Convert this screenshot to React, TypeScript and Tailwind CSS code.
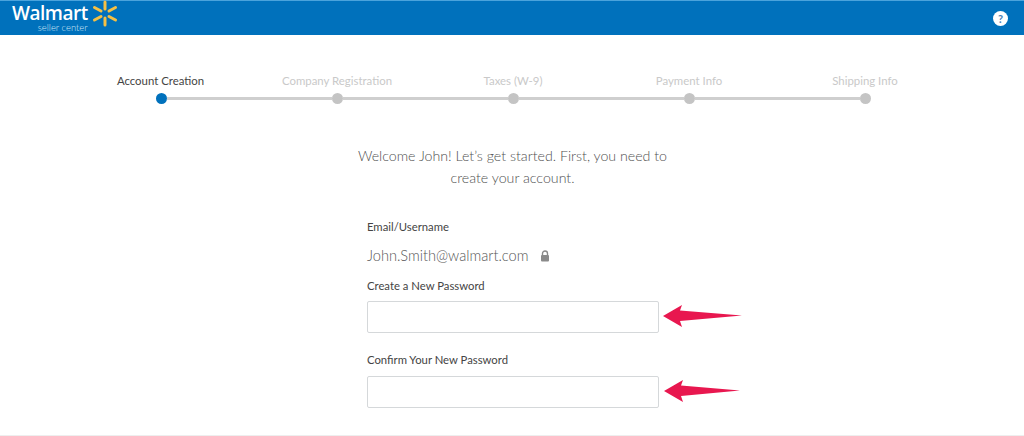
const steps = ["Account Creation", "Company Registration", "Taxes (W-9)", "Payment Info", "Shipping Info"];

function Spark() {
  return (
    <svg width="26" height="28" viewBox="0 0 26 28" className="-mt-[3px] ml-[4px] shrink-0">
      <g stroke="#f4c044" strokeWidth="3" strokeLinecap="round">
        <path d="M13 2 V9" />
        <path d="M13 18 V25" />
        <path d="M2.5 7.5 L9 11" />
        <path d="M23.5 7.5 L17 11" />
        <path d="M2.5 20 L9 16.5" />
        <path d="M23.5 20 L17 16.5" />
      </g>
    </svg>
  );
}

function Arrow({ end }: { end: number }) {
  return (
    <svg width="82" height="26" viewBox="0 0 82 26" className="shrink-0">
      <path d={`M1 12 L20 1 L18 6.5 L${end} 11.5 L18 17 L20 23 Z`} fill="#e8174f" />
    </svg>
  );
}

function Stepper() {
  return (
    <div className="flex justify-center pl-[2px] pt-[39px]">
      {steps.map((label, i) => (
        <div key={label} className="flex w-[176px] flex-col items-center">
          <div className={`whitespace-nowrap text-[11.4px] leading-[14px] ${i === 0 ? "-ml-[1px] text-[#444444]" : "text-[#c9c9c9]"}`}>
            {label}
          </div>
          <div className="mt-[5px] flex w-full items-center">
            <div className={`h-[3px] flex-1 ${i === 0 ? "" : "bg-[#cfcfcf]"}`} />
            <div className={`h-[11px] w-[11px] rounded-full ${i === 0 ? "bg-[#0071bc]" : "bg-[#c4c4c4]"}`} />
            <div className={`h-[3px] flex-1 ${i === 4 ? "" : "bg-[#cfcfcf]"}`} />
          </div>
        </div>
      ))}
    </div>
  );
}

export default function App() {
  return (
    <div className="flex h-[436px] w-[1024px] flex-col overflow-hidden border-b border-[#eeeeee] bg-white font-['Lato',sans-serif]">
      <header className="flex h-[35px] shrink-0 items-center justify-between border-t border-[#4aa3dc] bg-[#0071bc] pl-[12px] pr-[16px]">
        <div className="-mt-[1px] flex items-start">
          <div className="flex flex-col items-end">
            <div className="font-['Open_Sans',sans-serif] text-[19px] font-semibold leading-[20px] tracking-[-0.5px] text-white">Walmart</div>
            <div className="text-[9.5px] font-light leading-[9px] text-[#cfe6f6]">seller center</div>
          </div>
          <Spark />
        </div>
        <div className="flex h-[15px] w-[15px] items-center justify-center rounded-full bg-white text-[11px] font-bold leading-none text-[#4a7fb5]">
          ?
        </div>
      </header>

      <Stepper />

      <p className="mt-[41px] pl-[1px] text-center text-[14.2px] font-light leading-[22px] text-[#505050]">
        Welcome John! Let’s get started. First, you need to
        <br />
        create your account.
      </p>

      <form className="ml-[367px] mt-[31px] flex flex-col">
        <label className="text-[11.3px] leading-[14px] text-[#444444]">Email/Username</label>
        <div className="mt-[12px] flex h-[20px] items-center">
          <span className="text-[14.6px] font-light leading-[20px] text-[#555555]">John.Smith@walmart.com</span>
          <svg width="10" height="12" viewBox="0 0 10 12" className="ml-[12px]">
            <path d="M2.5 5.5 V3.5 a2.5 2.5 0 0 1 5 0 V5.5" fill="none" stroke="#8a8a8a" strokeWidth="1.4" />
            <rect x="1" y="5" width="8" height="6.5" rx="1" fill="#8a8a8a" />
          </svg>
        </div>
        <label className="mt-[13px] text-[11.3px] leading-[14px] text-[#444444]">Create a New Password</label>
        <div className="mt-[8px] flex items-center gap-[3px]">
          <input type="password" className="h-[32px] w-[292px] rounded-[2px] border border-[#d5d8da] bg-white" />
          <Arrow end={80} />
        </div>
        <label className="mt-[20px] text-[11.3px] leading-[14px] text-[#444444]">Confirm Your New Password</label>
        <div className="mt-[9px] flex items-center gap-[4px]">
          <input type="password" className="h-[32px] w-[292px] rounded-[2px] border border-[#d5d8da] bg-white" />
          <Arrow end={77} />
        </div>
      </form>
    </div>
  );
}
